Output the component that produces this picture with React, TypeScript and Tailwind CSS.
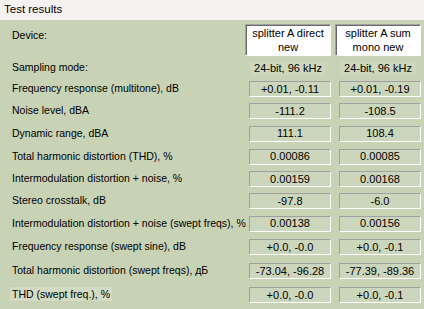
import React from 'react'

type Row = { label: string; a: string; b: string; h: string; hl?: boolean }

const rows: Row[] = [
  { label: 'Frequency response (multitone), dB', a: '+0.01, -0.11', b: '+0.01, -0.19', h: 'h-[22px]' },
  { label: 'Noise level, dBA', a: '-111.2', b: '-108.5', h: 'h-[22px]' },
  { label: 'Dynamic range, dBA', a: '111.1', b: '108.4', h: 'h-[23px]' },
  { label: 'Total harmonic distortion (THD), %', a: '0.00086', b: '0.00085', h: 'h-[23px]' },
  { label: 'Intermodulation distortion + noise, %', a: '0.00159', b: '0.00168', h: 'h-[22px]' },
  { label: 'Stereo crosstalk, dB', a: '-97.8', b: '-6.0', h: 'h-[22px]' },
  { label: 'Intermodulation distortion + noise (swept freqs), %', a: '0.00138', b: '0.00156', h: 'h-[23px]' },
  { label: 'Frequency response (swept sine), dB', a: '+0.0, -0.0', b: '+0.0, -0.1', h: 'h-[24px]' },
  { label: 'Total harmonic distortion (swept freqs), дБ', a: '-73.04, -96.28', b: '-77.39, -89.36', h: 'h-[24px]' },
  { label: 'THD (swept freq.), %', a: '+0.0, -0.0', b: '+0.0, -0.1', h: 'h-[24px]', hl: true },
]

const ValueBox: React.FC<{ value: string }> = ({ value }) => (
  <div className="w-[82px] h-[16px] flex items-center justify-center border border-t-[#a0a0a0] border-l-[#a0a0a0] border-b-white border-r-white bg-[#ccd6bc] leading-none text-[11px]">
    {value}
  </div>
)

const DeviceBox: React.FC<{ children: React.ReactNode }> = ({ children }) => (
  <div className="w-[86px] h-[32px] flex items-center justify-center text-center border border-t-[#a0a0a0] border-l-[#a0a0a0] border-b-white border-r-white bg-white shadow-[inset_1px_1px_0_#696969] leading-[14px] text-[11px]">
    {children}
  </div>
)

export default function App() {
  return (
    <div
      className="w-[424px] h-[309px] overflow-hidden bg-[#c8d3b6] text-black text-[10.5px]"
      style={{ fontFamily: '"Liberation Sans", Arial, sans-serif' }}
    >
      {/* Title */}
      <div className="h-[20px] bg-[#f6f2f2] flex items-center pl-1 text-[11.5px]">Test results</div>

      {/* Device */}
      <div className="flex pt-[4px] h-[36px]">
        <div className="flex-1 pl-3 pt-[4px]">Device:</div>
        <div className="flex gap-[4px] pr-[3px]">
          <DeviceBox>
            splitter A direct
            <br />
            new
          </DeviceBox>
          <DeviceBox>
            splitter A sum
            <br />
            mono new
          </DeviceBox>
        </div>
      </div>

      {/* Sampling mode */}
      <div className="flex items-center h-[22px] pt-[2px]">
        <div className="flex-1 pl-3">Sampling mode:</div>
        <div className="flex gap-[4px] pr-[3px] text-[11px]">
          <div className="w-[86px] flex justify-center">
            <span className="bg-[#cdd7bd] px-1 leading-[13px]">24-bit, 96 kHz</span>
          </div>
          <div className="w-[86px] flex justify-center">
            <span className="bg-[#cdd7bd] px-1 leading-[13px]">24-bit, 96 kHz</span>
          </div>
        </div>
      </div>

      {rows.map(r => (
        <div key={r.label} className={`flex items-center ${r.h}`}>
          <div className="flex-1 pl-[10px] whitespace-nowrap">
            <span className={`px-[2px] py-[1px] ${r.hl ? 'bg-[#d3dbc4]' : ''}`}>{r.label}</span>
          </div>
          <div className="flex gap-[8px] pr-[3px]">
            <ValueBox value={r.a} />
            <ValueBox value={r.b} />
          </div>
        </div>
      ))}
    </div>
  )
}
